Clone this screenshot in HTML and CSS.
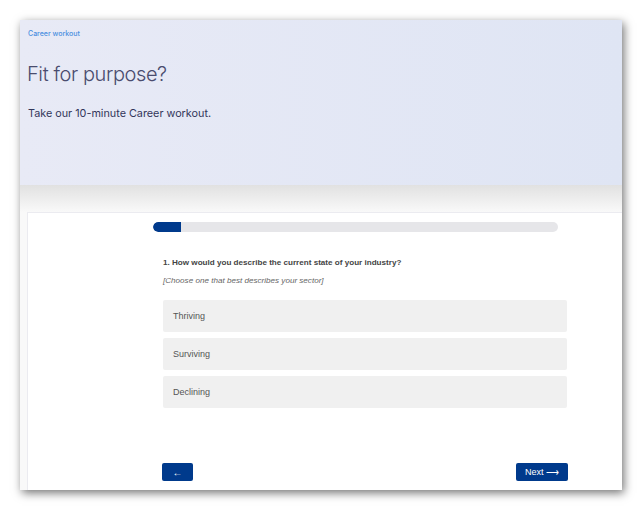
FILE: index.html
```html
<!DOCTYPE html>
<html>
<head>
<meta charset="utf-8">
<link rel="stylesheet" href="styles.css">
</head>
<body>
<div class="window">
  <header class="hero">
    <div class="crumb">Career workout</div>
    <h1 class="title">Fit for purpose?</h1>
    <p class="lead">Take our 10-minute Career workout.</p>
  </header>
  <main class="main">
    <section class="card">
      <div class="progress"><div class="progress-fill"></div></div>
      <div class="quiz">
        <p class="question">1. How would you describe the current state of your industry?</p>
        <p class="hint">[Choose one that best describes your sector]</p>
        <div class="options">
          <div class="option">Thriving</div>
          <div class="option">Surviving</div>
          <div class="option">Declining</div>
        </div>
        <div class="nav">
          <button class="btn btn-back">&larr;</button>
          <button class="btn btn-next">Next &#10230;</button>
        </div>
      </div>
    </section>
  </main>
</div>
</body>
</html>
```

FILE: styles.css
```css
* { box-sizing: border-box; }
html, body { margin: 0; padding: 0; background: #fff; }
body { width: 642px; height: 510px; overflow: hidden; }

.window {
  margin: 20px 0 0 20px;
  width: 602px;
  height: 470px;
  box-shadow: 2px 3px 9px rgba(0,0,0,0.55);
  display: flex;
  flex-direction: column;
  overflow: hidden;
}

.hero {
  height: 165px;
  flex: none;
  background: linear-gradient(to right, #e8eaf6, #dfe5f4);
  padding: 9px 0 0 8px;
  font-family: Inter, "Noto Sans", sans-serif;
}
.crumb {
  font-size: 7px;
  color: #4a8fe0;
  line-height: 10px;
  font-weight: 500;
}
.title {
  margin: 22px 0 0 -1px;
  font-size: 20px;
  font-weight: 300;
  color: #4a4c6e;
  line-height: 26px;
  letter-spacing: -0.4px;
}
.lead {
  margin: 20px 0 0;
  font-size: 10.8px;
  color: #33365a;
  line-height: 14px;
}

.main {
  flex: 1;
  background: linear-gradient(#e1e1e1 0, #f9f9f9 27px, #f9f9f9 100%);
  padding: 27px 0 0 7px;
  display: flex;
}
.card {
  flex: 1;
  background: #fff;
  border-top: 1px solid #ebebf0;
  border-left: 1px solid #ebebf0;
  padding: 9px 0 0 125px;
  font-family: "Liberation Sans", Arial, sans-serif;
}
.progress {
  width: 405px;
  height: 10px;
  border-radius: 5px;
  background: #e6e6e9;
  overflow: hidden;
}
.progress-fill {
  width: 28px;
  height: 100%;
  background: #003a8c;
  border-radius: 5px 0 0 5px;
}

.quiz {
  margin-left: 10px;
  width: 404px;
}
.question {
  margin: 25px 0 0;
  font-size: 8.1px;
  font-weight: bold;
  color: #444;
  line-height: 12px;
}
.hint {
  margin: 6px 0 0;
  font-size: 8.1px;
  font-style: italic;
  color: #666;
  line-height: 12px;
}
.options {
  margin-top: 13px;
  display: flex;
  flex-direction: column;
  gap: 6px;
}
.option {
  height: 32px;
  background: #f0f0f0;
  border-radius: 2px;
  padding-left: 10px;
  display: flex;
  align-items: center;
  font-size: 9px;
  color: #555;
}
.nav {
  margin-top: 55px;
  display: flex;
  justify-content: space-between;
  margin-left: -1px;
}
.btn {
  height: 18px;
  border: none;
  border-radius: 2px;
  background: #003a8c;
  color: #fff;
  font-family: "Liberation Sans", Arial, sans-serif;
  font-size: 9px;
  padding: 0;
  display: flex;
  align-items: center;
  justify-content: center;
}
.btn-back { width: 31px; font-size: 10px; }
.btn-next { width: 52px; margin-right: -1px; }
```
